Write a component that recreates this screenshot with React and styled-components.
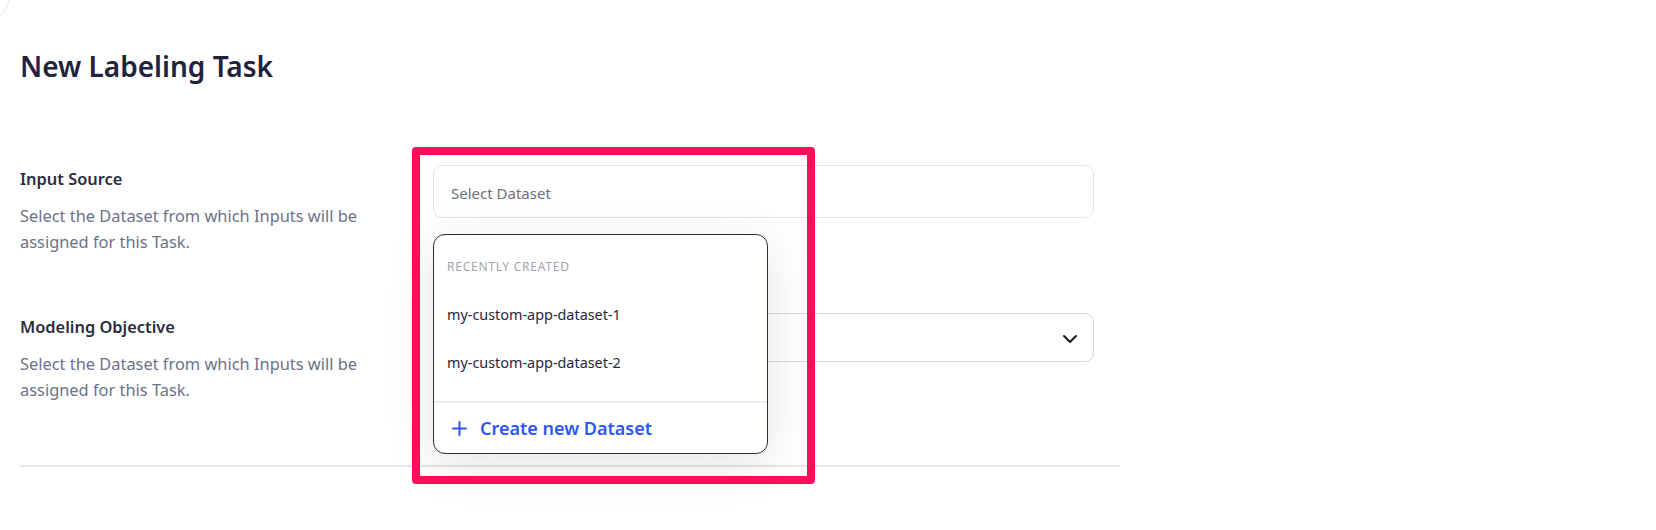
import React from "react";
import styled, {createGlobalStyle} from "styled-components";

const GlobalStyle = createGlobalStyle`
  html, body {
    margin: 0;
    padding: 0;
    background: #ffffff;
  }
  body {
    font-family: "Noto Sans", "Open Sans", Arial, sans-serif;
    color: #24243a;
  }
`;

const recent = ["my-custom-app-dataset-1", "my-custom-app-dataset-2"];

const App = () => {
  return (
    <>
      <GlobalStyle />
      <Page>
        <BackButton />
        <Title>New Labeling Task</Title>
        <Form>
          <Row>
            <Info>
              <Label>Input Source</Label>
              <Hint>
                Select the Dataset from which Inputs will be assigned for this
                Task.
              </Hint>
            </Info>
            <Field>
              <Select $tall>
                <Placeholder>Select Dataset</Placeholder>
              </Select>
              <Highlight />
              <Menu>
                <MenuHeading>Recently created</MenuHeading>
                <MenuList>
                  {recent.map((name) => (
                    <MenuItem key={name}>{name}</MenuItem>
                  ))}
                </MenuList>
                <MenuFooter>
                  <svg width="15" height="15" viewBox="0 0 15 15" fill="none">
                    <path
                      d="M7.5 1v13M1 7.5h13"
                      stroke="currentColor"
                      strokeWidth="2"
                      strokeLinecap="round"
                    />
                  </svg>
                  Create new Dataset
                </MenuFooter>
              </Menu>
            </Field>
          </Row>
          <Row>
            <Info>
              <Label>Modeling Objective</Label>
              <Hint>
                Select the Dataset from which Inputs will be assigned for this
                Task.
              </Hint>
            </Info>
            <Field>
              <Select>
                <Placeholder />
                <svg width="16" height="10" viewBox="0 0 16 10" fill="none">
                  <path
                    d="M2 2l6 6 6-6"
                    stroke="#16161f"
                    strokeWidth="2"
                    strokeLinecap="round"
                    strokeLinejoin="round"
                  />
                </svg>
              </Select>
            </Field>
          </Row>
        </Form>
        <Divider />
      </Page>
    </>
  );
};

const Page = styled.div`
  position: relative;
  padding: 46px 0 0 20px;
  height: 530px;
  box-sizing: border-box;
  overflow: hidden;
`;

const BackButton = styled.div`
  position: absolute;
  left: -31px;
  top: -21px;
  width: 38px;
  height: 38px;
  border: 1px solid #e6e6ea;
  border-radius: 50%;
`;

const Title = styled.h1`
  margin: 0;
  font-size: 28px;
  line-height: 40px;
  font-weight: 600;
  color: #22223a;
`;

const Form = styled.div`
  width: 1100px;
  margin-top: 79px;
  display: flex;
  flex-direction: column;
  gap: 58px;
`;

const Row = styled.div`
  display: grid;
  grid-template-columns: 413px 661px;
  align-items: start;
`;

const Info = styled.div`
  padding-top: 3px;
  width: 345px;
`;

const Label = styled.div`
  font-size: 16.4px;
  line-height: 22px;
  font-weight: 600;
  color: #2b2c42;
`;

const Hint = styled.div`
  margin-top: 13px;
  font-size: 16.4px;
  line-height: 26px;
  color: #6b7289;
`;

const Field = styled.div`
  position: relative;
`;

const Select = styled.div`
  height: ${(p) => (p.$tall ? "53px" : "49px")};
  box-sizing: border-box;
  border: 1px solid ${(p) => (p.$tall ? "#e4e5ea" : "#d6d8e2")};
  border-radius: 9px;
  background: #ffffff;
  display: flex;
  align-items: center;
  justify-content: space-between;
  padding: 2px 15px 0 17px;
`;

const Placeholder = styled.span`
  font-size: 15px;
  color: #6b6f7d;
`;

const Highlight = styled.div`
  position: absolute;
  left: -21px;
  top: -18px;
  width: 403px;
  height: 337px;
  box-sizing: border-box;
  border: 8px solid #ff0f5a;
  border-radius: 4px;
  z-index: 2;
  pointer-events: none;
`;

const Menu = styled.div`
  position: absolute;
  left: 0;
  top: 69px;
  width: 335px;
  height: 220px;
  box-sizing: border-box;
  background: #ffffff;
  border: 1px solid #2c2c3e;
  border-radius: 12px;
  box-shadow: 0 10px 50px rgba(0, 0, 0, 0.11);
  display: flex;
  flex-direction: column;
  z-index: 1;
`;

const MenuHeading = styled.div`
  padding: 24px 13px 0;
  font-size: 12px;
  line-height: 16px;
  letter-spacing: 0.75px;
  text-transform: uppercase;
  color: #a3a3ab;
`;

const MenuList = styled.div`
  display: flex;
  flex-direction: column;
  padding-top: 30px;
  gap: 28px;
  flex: 1;
`;

const MenuItem = styled.div`
  padding: 0 13px;
  font-size: 14.4px;
  line-height: 20px;
  color: #27283a;
`;

const MenuFooter = styled.div`
  border-top: 2px solid #ededf0;
  height: 52px;
  box-sizing: border-box;
  display: flex;
  align-items: center;
  gap: 13px;
  padding: 0 0 0 18px;
  font-size: 18px;
  font-weight: 600;
  color: #2f55f4;
`;

const Divider = styled.div`
  width: 1100px;
  height: 2px;
  background: #e6e6ea;
  margin-top: 62px;
`;

export default App;
